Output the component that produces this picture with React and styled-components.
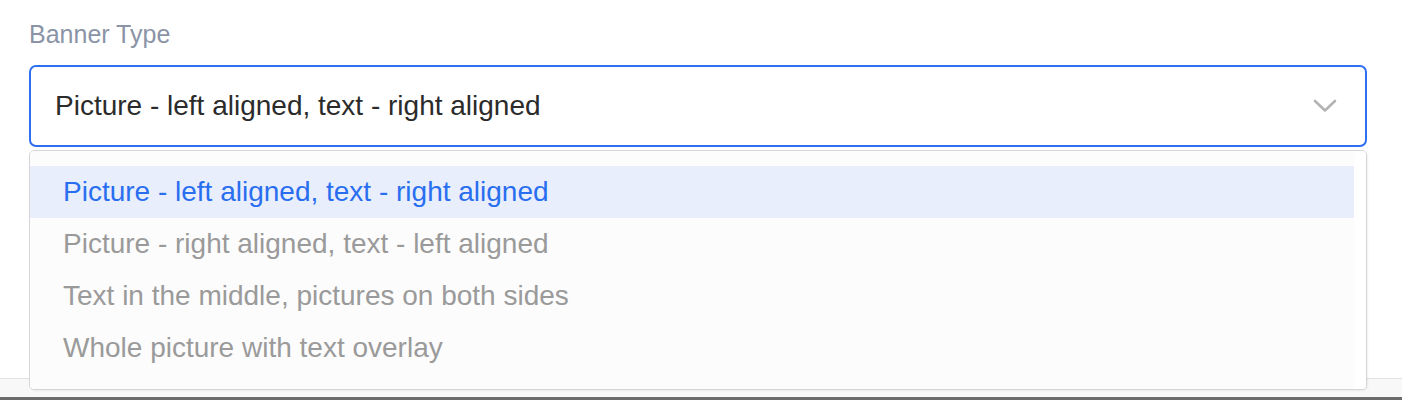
import React from 'react';
import styled, { createGlobalStyle } from 'styled-components';

const GlobalStyle = createGlobalStyle`
  html, body {
    margin: 0;
    padding: 0;
    background: #ffffff;
    font-family: "Liberation Sans", Arial, Helvetica, sans-serif;
  }
`;

const Page = styled.div`
  width: 1402px;
  height: 400px;
  display: flex;
  flex-direction: column;
  overflow: hidden;
`;

const FormArea = styled.div`
  height: 359px;
  padding: 19px 35px 0 29px;
  border-bottom: 1px solid #e2e2e2;
  display: flex;
  flex-direction: column;
`;

const Label = styled.div`
  font-size: 25px;
  line-height: 30px;
  color: #8a94a6;
  margin-bottom: 16px;
`;

const SelectWrap = styled.div`
  position: relative;
  z-index: 2;
`;

const SelectBox = styled.div`
  height: 82px;
  box-sizing: border-box;
  border: 2px solid #2f6ff0;
  border-radius: 7px;
  padding: 0 28px 0 24px;
  display: flex;
  align-items: center;
  justify-content: space-between;
  background: #fff;
  font-size: 28px;
  color: #2b2b2b;
`;

const NextField = styled.div`
  margin-top: 33px;
  flex: 1;
  border: 1px solid #e4e4e4;
  border-bottom: none;
  border-radius: 6px 6px 0 0;
`;

const FooterStrip = styled.div`
  height: 18px;
  background: #f8f8f8;
`;

const BottomBar = styled.div`
  height: 3px;
  background: #6b6b6b;
`;

const Menu = styled.div`
  position: absolute;
  top: 85px;
  left: 0;
  right: 0;
  height: 240px;
  box-sizing: border-box;
  border: 1px solid #d6d6d6;
  border-radius: 5px;
  background: #fff;
  box-shadow: 1px 1px 2px rgba(0, 0, 0, 0.06);
  display: flex;
  overflow: hidden;
`;

const List = styled.ul`
  flex: 1;
  margin: 0;
  padding: 15px 0;
  list-style: none;
  background: #fcfcfc;
`;

const Track = styled.div`
  width: 12px;
  background: #ffffff;
`;

const Option = styled.li`
  height: 52px;
  display: flex;
  align-items: center;
  padding-left: 33px;
  font-size: 28px;
  color: ${(p) => (p.$active ? '#2a6ef0' : '#9a9a9a')};
  background: ${(p) => (p.$active ? '#e8eefb' : 'transparent')};
`;

const Chevron = () => (
  <svg width="24" height="14" viewBox="0 0 24 14" fill="none">
    <polyline
      points="2,2 12,11.5 22,2"
      stroke="#b3b3b3"
      strokeWidth="2.6"
      strokeLinecap="round"
      strokeLinejoin="round"
    />
  </svg>
);

const options = [
  'Picture - left aligned, text - right aligned',
  'Picture - right aligned, text - left aligned',
  'Text in the middle, pictures on both sides',
  'Whole picture with text overlay',
];

export default function App() {
  const selected = options[0];
  return (
    <>
      <GlobalStyle />
      <Page>
        <FormArea>
          <Label>Banner Type</Label>
          <SelectWrap>
            <SelectBox>
              <span>{selected}</span>
              <Chevron />
            </SelectBox>
            <Menu>
              <List>
                {options.map((o) => (
                  <Option key={o} $active={o === selected}>
                    {o}
                  </Option>
                ))}
              </List>
              <Track />
            </Menu>
          </SelectWrap>
          <NextField />
        </FormArea>
        <FooterStrip />
        <BottomBar />
      </Page>
    </>
  );
}
